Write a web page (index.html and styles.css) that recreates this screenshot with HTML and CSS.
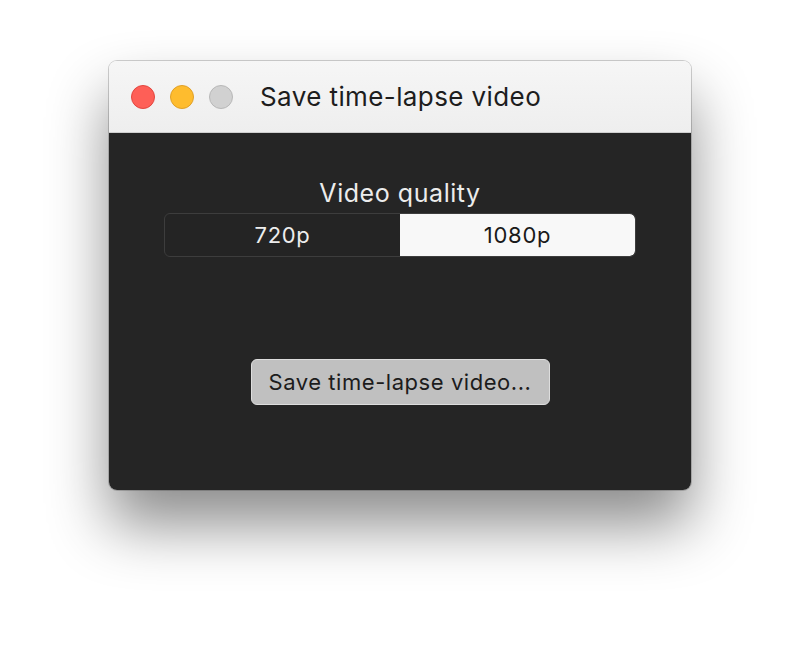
FILE: index.html
```html
<!DOCTYPE html>
<html>
<head>
<meta charset="utf-8">
<link rel="stylesheet" href="styles.css">
</head>
<body>
<div class="window">
  <div class="titlebar">
    <div class="lights">
      <span class="light red"></span>
      <span class="light yellow"></span>
      <span class="light gray"></span>
    </div>
    <div class="title">Save time-lapse video</div>
  </div>
  <div class="content">
    <div class="label">Video quality</div>
    <div class="segmented">
      <div class="seg">720p</div>
      <div class="seg active">1080p</div>
    </div>
    <button class="save">Save time-lapse video...</button>
  </div>
</div>
</body>
</html>
```
FILE: styles.css
```css
html, body {
  margin: 0;
  padding: 0;
  background: #ffffff;
}
body {
  font-family: Inter, "Noto Sans", sans-serif;
  width: 800px;
  height: 645px;
  overflow: hidden;
}
.window {
  margin: 61px 0 0 109px;
  width: 582px;
  height: 429px;
  border-radius: 8px;
  overflow: hidden;
  display: flex;
  flex-direction: column;
  box-shadow: 0 35px 60px rgba(0,0,0,0.45), 0 0 0 1px rgba(0,0,0,0.18);
}
.titlebar {
  height: 72px;
  flex: none;
  background: linear-gradient(#f6f6f6, #eeeeee);
  border-bottom: 1px solid #cfcfcf;
  box-sizing: border-box;
  display: flex;
  align-items: center;
  padding-left: 22px;
}
.lights {
  display: flex;
  gap: 15px;
}
.light {
  width: 24px;
  height: 24px;
  border-radius: 50%;
  box-sizing: border-box;
}
.red { background: #fe5f57; border: 1px solid #e2463f; }
.yellow { background: #febc2e; border: 1px solid #e0a028; }
.gray { background: #d1d1d1; border: 1px solid #b8b8b8; }
.title {
  margin-left: 27px;
  font-size: 26px;
  color: #1d1d1d;
  letter-spacing: 0.4px;
}
.content {
  flex: 1;
  background: #252525;
  display: flex;
  flex-direction: column;
  align-items: center;
  padding-top: 45px;
}
.label {
  color: #ececec;
  font-size: 25px;
  line-height: 30px;
  letter-spacing: 0.55px;
}
.segmented {
  margin-top: 5px;
  width: 472px;
  height: 44px;
  display: flex;
  border: 1px solid #3d3d3d;
  border-radius: 6px;
  box-sizing: border-box;
  overflow: hidden;
  background: #242424;
}
.seg {
  flex: 1;
  display: flex;
  align-items: center;
  justify-content: center;
  font-size: 22px;
  letter-spacing: 0.7px;
  color: #ededed;
}
.seg.active {
  background: #f8f8f8;
  color: #1a1a1a;
  border-radius: 0 5px 5px 0;
}
.save {
  margin-top: 102px;
  width: 299px;
  height: 46px;
  background: #c0c0c0;
  border: 1px solid #dddddd;
  border-radius: 6px;
  font-family: Inter, "Noto Sans", sans-serif;
  font-size: 22px;
  letter-spacing: 0.55px;
  color: #1c1c1c;
  padding: 0;
}
```
